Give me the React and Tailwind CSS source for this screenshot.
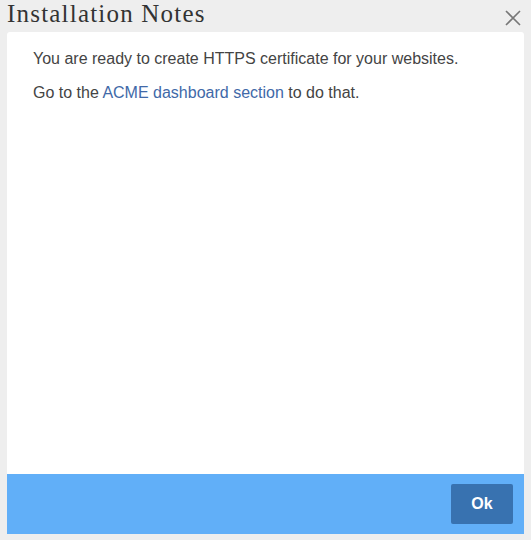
export default function App() {
  return (
    <div className="flex h-[540px] w-[531px] flex-col bg-[#eeeeee] pl-[7px] pr-[7px] pb-[6px]">
      <div className="flex h-[32px] items-start justify-between">
        <h1 className="font-['Liberation_Serif',serif] text-[25px] leading-[28px] tracking-[1.2px] text-[#333333]">
          Installation Notes
        </h1>
        <button className="mr-[2px] mt-[9px] text-[#777777]" aria-label="Close">
          <svg width="18" height="18" viewBox="0 0 18 18" fill="none" stroke="currentColor" strokeWidth="1.6">
            <path d="M2 2 L16 16 M16 2 L2 16" />
          </svg>
        </button>
      </div>
      <div className="flex flex-1 flex-col overflow-hidden rounded-t-[3px] bg-white">
        <div className="flex-1 px-[26px] pt-[15px] font-['Liberation_Sans',Arial,sans-serif] text-[16px] leading-[24px] text-[#444444]">
          <p>You are ready to create HTTPS certificate for your websites.</p>
          <p className="mt-[10px]">
            Go to the <a href="#" className="text-[#4169a8]">ACME dashboard section</a> to do that.
          </p>
        </div>
        <div className="flex h-[60px] items-center justify-end bg-[#61aff8] pr-[11px]">
          <button className="h-[40px] w-[62px] rounded-[2px] bg-[#3872b0] font-['Liberation_Sans',Arial,sans-serif] text-[16px] font-bold text-white">
            Ok
          </button>
        </div>
      </div>
    </div>
  );
}
